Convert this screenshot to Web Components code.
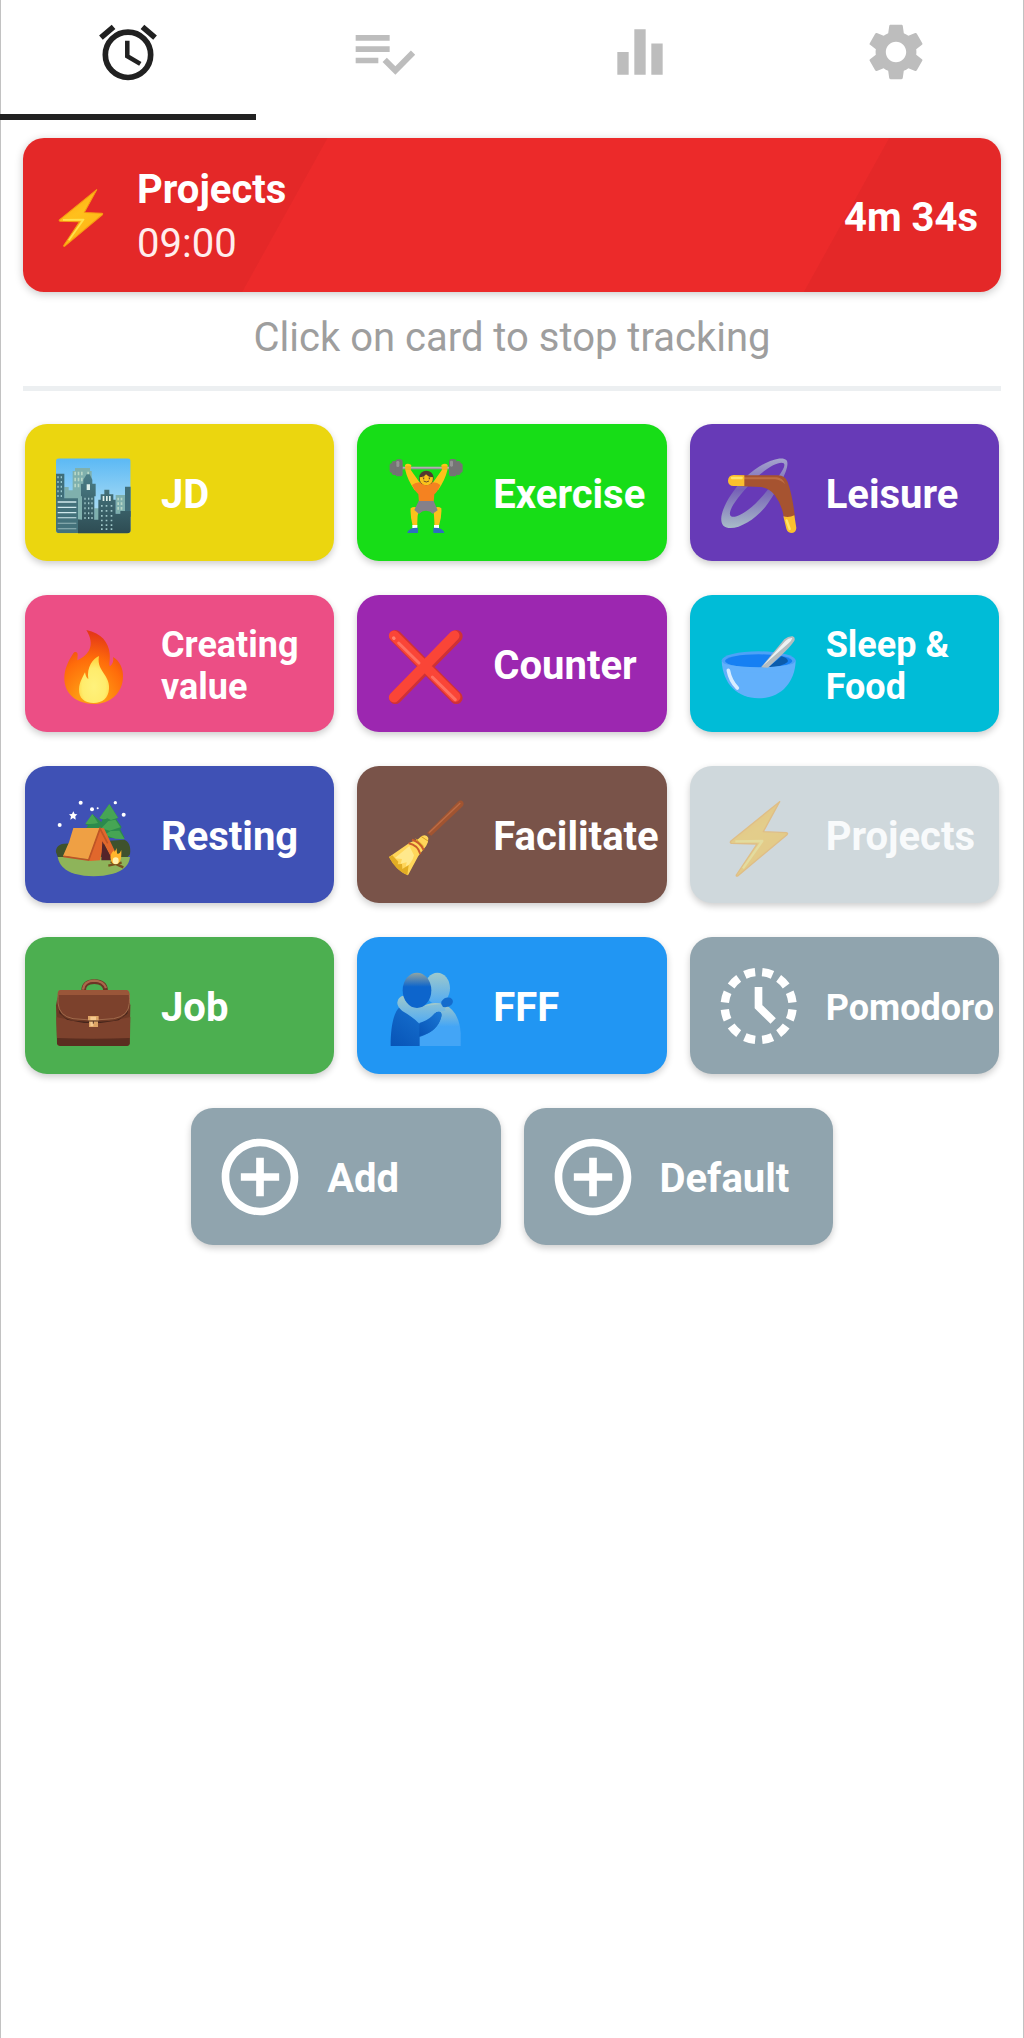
<!DOCTYPE html>
<html lang="en">
<head>
<meta charset="utf-8">
<meta name="viewport" content="width=device-width, initial-scale=1">
<title>Time tracker</title>
<style>
  body { margin: 0; background: #fff; font-family: Roboto, "Liberation Sans", sans-serif; font-size: 40px; }
</style>
</head>
<body>
<tracker-app></tracker-app>

<script>
const svg = (box, body) => `<svg viewBox="${box}" aria-hidden="true">${body}</svg>`;
const rects = (fill, list) => `<path fill="${fill}" d="${list.map(([x, y, w, h]) => `M${x} ${y}h${w}v${h}h${-w}z`).join('')}"/>`;
const dots = (xs, ys, w, h) => xs.flatMap(x => ys.map(y => [x, y, w, h]));

const ICONS = {
  alarm: svg('0 0 24 24', `<g fill="none" stroke="currentColor"><circle cx="12" cy="13" r="8" stroke-width="2"/><path stroke-width="1.6" d="M11.75 8v5.45l4.6 2.75"/><path stroke-width="2" d="M6.9 3.1 2.45 6.9M17.1 3.1l4.45 3.8"/></g>`),
  tasks: svg('0 0 24 24', `<path fill="currentColor" d="M14 10H2v2h12v-2zm0-4H2v2h12V6zM2 16h8v-2H2v2zm19.5-4.5L23 13l-6.99 7-4.51-4.5L13 14l3.01 3 5.49-5.5z"/>`),
  chart: svg('0 0 24 24', `<path fill="currentColor" d="M10 20h4V4h-4v16zm-6 0h4v-8H4v8zM16 9v11h4V9h-4z"/>`),
  settings: svg('0 0 24 24', `<path fill="currentColor" d="M19.14 12.94c.04-.3.06-.61.06-.94 0-.32-.02-.64-.07-.94l2.03-1.58c.18-.14.23-.41.12-.61l-1.92-3.32c-.12-.22-.37-.29-.59-.22l-2.39.96c-.5-.38-1.03-.7-1.62-.94L14.4 2.81c-.04-.24-.24-.41-.48-.41h-3.84c-.24 0-.43.17-.47.41L9.25 5.35C8.66 5.59 8.12 5.92 7.63 6.29L5.24 5.33c-.22-.08-.47 0-.59.22L2.74 8.87c-.12.21-.08.47.12.61l2.03 1.58C4.84 11.36 4.8 11.69 4.8 12s.02.64.07.94l-2.03 1.58c-.18.14-.23.41-.12.61l1.92 3.32c.12.22.37.29.59.22l2.39-.96c.5.38 1.03.7 1.62.94l.36 2.54c.05.24.24.41.48.41h3.84c.24 0 .44-.17.47-.41l.36-2.54c.59-.24 1.13-.56 1.62-.94l2.39.96c.22.08.47 0 .59-.22l1.92-3.32c.12-.22.07-.47-.12-.61L19.14 12.94zM12 15.6c-1.98 0-3.6-1.62-3.6-3.6s1.62-3.6 3.6-3.6 3.6 1.62 3.6 3.6-1.62 3.6-3.6 3.6z"/>`),
  add: svg('0 0 24 24', `<path fill="currentColor" d="M13 7h-2v4H7v2h4v4h2v-4h4v-2h-4V7zm-1-5C6.48 2 2 6.48 2 12s4.48 10 10 10 10-4.48 10-10S17.52 2 12 2zm0 18c-4.41 0-8-3.59-8-8s3.59-8 8-8 8 3.59 8 8-3.59 8-8 8z"/>`),
  pomodoro: svg('117 627 276 276', `<g fill="none" stroke="currentColor"><circle cx="254" cy="765" r="102" stroke-width="25" pathLength="120" stroke-dasharray="6 4" stroke-dashoffset="-2"/><path stroke-width="23" d="M253.500 708V767l44 43"/></g>`),

  bolt: svg('117 115 276 276', `
    <defs><linearGradient id="b" x1="0" y1="0" x2=".5" y2="1"><stop offset="0" stop-color="#ff9f0f"/><stop offset=".5" stop-color="#ffc01c"/><stop offset="1" stop-color="#ffb414"/></linearGradient></defs>
    <path fill="url(#b)" stroke="#f79b12" stroke-width="4" stroke-linejoin="round" d="M317 153 170 272q-3 5 3 6l76 2-62 93q-1 5 4 3L339 252q4-5-2-6l-69-3z"/>
    <path fill="none" stroke="#ffe24d" stroke-width="7" stroke-linejoin="round" d="M184 272l81-1-58 82"/>`),

  city: svg('144 112 276 276', `
    <defs>
      <clipPath id="c"><rect x="168" y="146" width="224" height="225" rx="10"/></clipPath>
      <linearGradient id="s" x2="0" y2="1"><stop stop-color="#5bb9f5"/><stop offset=".8" stop-color="#b5e1f3"/></linearGradient>
      <linearGradient id="d" x2="0" y2="1"><stop stop-color="#4b7e87"/><stop offset="1" stop-color="#2d4b52"/></linearGradient>
    </defs>
    <g clip-path="url(#c)">
      <rect x="168" y="146" width="224" height="225" fill="url(#s)"/>
      ${rects('#7fb0ad', [[218,184,57,150],[225,175,45,12],[193,232,13,40],[206,242,12,30],[283,296,14,40],[347,256,29,56]])}
      ${rects('#b7d6c6', [...dots([223,233,243,262],[186,204,222],5,11), ...dots([352,362],[264,278,292],5,8)])}
      ${rects('#3f6e79', [[168,192,25,80],[375,231,20,90]])}
      ${rects('#9ac9cf', dots([172,182],[200,214,228,242,256],4,6))}
      <path fill="url(#d)" d="M246 330v-70h-3v-38h7v-12l10-16h9l8 16v12h10v38h-4v70h12V270h7v-16h11v-14h15v14h12v16h7v42h14v-8h32v70H234v-45z"/>
      ${rects('#dff0ea', [[260,224,10,17],[308,259,5,15],[318,259,5,15],[327,259,5,15]])}
      ${rects('#9fc6c8', [...dots([253,264,274],[264,278,293,308,322],4,6), ...dots([303,317,332],[286,301,316,330,344,356],5,5)])}
      <path fill="#44727b" d="M168 266h66v105h-66z"/>
      ${rects('#cfe9ec', [[173,275,56,4],[173,291,56,4],[173,307,56,4],[173,323,56,3]])}
      ${rects('#94b7b9', [[173,339,56,3],[173,356,56,3]])}
    </g>`),

  lifter: svg('121 112 276 276', `
    <path stroke="#9a9a9a" stroke-width="7" d="M165 175h190"/>
    <path stroke="#c5c5c5" stroke-width="2" d="M190 173h140"/>
    <g fill="#747474"><rect x="150" y="161" width="10" height="28" rx="5"/><rect x="156" y="154" width="16" height="42" rx="6"/><rect x="167" y="149" width="22" height="51" rx="8"/><rect x="359" y="161" width="10" height="28" rx="5"/><rect x="348" y="154" width="15" height="42" rx="6"/><rect x="328" y="148" width="23" height="52" rx="8"/></g>
    <g fill="#949494"><rect x="170" y="154" width="9" height="18" rx="4"/><rect x="331" y="153" width="9" height="18" rx="4"/></g>
    <g fill="#fcc21b"><path d="M196 166q7-7 19 0l-2 14 28 40-16 22q-22-32-28-60z"/><path d="M324 166q-7-7-19 0l2 14-28 40 16 22q22-32 28-60z"/>
    <path d="M213 296q12-9 25 3-6 20-5 49h-14q-8-30-6-52zM305 296q-12-9-25 3 5 20 4 49h14q9-30 7-52z"/></g>
    <g fill="none" stroke="#e59623" stroke-width="2"><path d="M198 172h16M196 178h17M306 172h16M306 178h16"/></g>
    <path fill="#f58220" d="M217 226q10-8 23-8h40q14 0 22 8-8 20-18 28l-2 24h-44l-2-24q-12-10-19-28z"/>
    <path fill="#85808a" d="M237 274h45l12 28-15 10q-8-9-20-9t-21 10l-14-12z"/>
    <path fill="#fff" d="M218 346h15v10h-15zM283 346h15v10h-15z"/>
    <path fill="#2f6dc0" d="M235 354v16h-32q1-9 17-15zM281 354v16h33q-1-9-17-15z"/>
    <circle cx="260" cy="205" r="22" fill="#543930"/>
    <path fill="#fcc21b" d="M240 203q14-1 19-9 8 9 21 9 0 23-20 24-20-1-20-24z"/>
    <path fill="none" stroke="#4e342e" stroke-width="2.500" d="M249 202h5M267 202h5M252 214q8 6 16 0"/>
    <circle cx="252" cy="207" r="2" fill="#4e342e"/><circle cx="269" cy="207" r="2" fill="#4e342e"/>`),

  boomerang: svg('117 112 276 276', `
    <defs><linearGradient id="w" x2="0" y2="1"><stop stop-color="#a5a6cc"/><stop offset=".45" stop-color="#7661b7"/><stop offset="1" stop-color="#a8bcc8"/></linearGradient></defs>
    <path fill="url(#w)" fill-rule="evenodd" d="M337 151c14 16-18 76-55 130-36 52-107 91-134 67-22-25 17-97 65-144 49-47 109-68 124-53zM329 161c-12-9-57 15-98 59-42 43-74 89-60 100 15 8 57-16 98-65 39-45 71-85 60-94z"/>
    <path fill="#a65330" d="M185 197h127q21 1 29 20 14 38 22 106-17 6-34-3-6-37-27-64-15-21-42-24l-75-3z"/>
    <path fill="#bd6d43" d="M210 203h99q17 2 25 21-14-14-31-15h-93z"/>
    <path fill="#fbc02d" d="M211 197v32h-32q-17-1-17-16 1-16 17-17zM328 320q17 5 33-3l6 38q-1 14-13 15-13 0-17-13z"/>
    <path fill="none" stroke="#ffe36a" stroke-width="7" stroke-linecap="round" d="M174 205h29M338 332l9 26"/>`),

  fire: svg('144 624 276 276', `
    <defs>
      <radialGradient id="f" cx=".45" cy="1" r=".95"><stop offset=".25" stop-color="#ff9913"/><stop offset=".65" stop-color="#ff6c0a"/><stop offset="1" stop-color="#e53916"/></radialGradient>
      <radialGradient id="y" cx=".5" cy=".65" r=".65"><stop stop-color="#fff27c"/><stop offset=".6" stop-color="#ffec6c"/><stop offset="1" stop-color="#ffce35"/></radialGradient>
    </defs>
    <path fill="url(#f)" d="M259 660c46 9 67 38 70 71 2 21-3 31 1 38 8-7 12-17 9-28 22 12 31 38 30 59-1 48-36 81-87 82-54 0-89-31-89-77 0-28 12-52 27-75 4-7 14-5 13 5l-1 16c37-17 54-47 27-91z"/>
    <path fill="url(#y)" d="M297 738c-5 27 7 40 17 56 11 17 14 29 13 43-2 28-20 42-46 42-28 0-45-15-44-41 1-22 11-36 18-51 2 13 6 18 10 20-6-35 14-61 32-69z"/>`),

  cross: svg('121 624 276 276', `
    <g fill="none" stroke-linecap="round">
      <path stroke="#cf3136" stroke-width="38" d="m167 679 183 184M350 679 167 863"/>
      <path stroke="#fa4537" stroke-width="31" d="m163 677 184 183M344 677 163 862"/>
      <path stroke="#ff7061" stroke-width="9" d="m177 699 61 60M278 801l69 68"/>
      <path stroke="#ff8271" stroke-width="10" d="m162 684 1 1"/>
    </g>`),

  bowl: svg('117 624 276 276', `
    <path fill="#62b0fb" d="M143 754c4 66 45 111 111 111s108-46 111-111l-24-15H167z"/>
    <ellipse cx="254" cy="751" rx="111" ry="27" fill="#4da2f7"/>
    <ellipse cx="254" cy="753" rx="101" ry="20" fill="#1680f3"/>
    <path fill="#0b5cab" d="m323 739-42 34q44-3 60-17 4-10-18-17z"/>
    <path fill="#62b0fb" d="M150 762c65 13 145 13 208 0l-9 25H160z"/>
    <path fill="#b5bdc0" d="m261 772 70-84q12-10 25-9 10 4 4 15-12 20-78 79z"/>
    <path fill="#edf2f3" d="m265 769 69-76q10-10 21-9-3 11-13 17z"/>
    <path fill="none" stroke="#d8edff" stroke-width="11" stroke-linecap="round" d="M163 781q6 32 27 53"/>`),

  camping: svg('144 115 276 276', `
    <path fill="#3f522d" d="M170 310c-8-15 7-32 23-31l180-12c12 4 21 20 17 44l-24 27H180z"/>
    <path fill="#2b8a4d" d="m277 190-21 31 8 3-11 17h70l-22-23 6-1zM328 160l-30 43 10 2-14 33 8 24h72l-13-26 4-7-17-25 7-2z"/>
    <path fill="#46a554" d="m277 190-21 29q20 3 38-2zM328 160l-30 42q13 7 24 1l11 5 21-7zM325 211l-21 22 25 7 32-10-15-23zM332 241l-18 11 32 12 28 2-16-26z"/>
    <path fill="#8eb45a" d="M173 319h217q-4 37-51 50-58 15-116 0-43-13-50-50z"/>
    <path fill="#e1672c" d="M299 232 266 323l3 8 31-2 12-50 22 43 20-1-42-88z"/>
    <path fill="#542429" d="m307 272-3 57h34z"/>
    <path fill="#efa044" d="M220 232h80l-34 94-77-10q21-42 31-84z"/>
    <path fill="none" stroke="#bd5426" stroke-width="5" d="m190 317 76 11 34-94 23 44"/>
    <path stroke="#79501f" stroke-width="7" d="m325 345 40-9M332 333l38 17"/>
    <path fill="#ffb52c" d="M332 326q-3-16 10-27-1 12 8-7 0 16 3 18 8-2 11-12 2 43-17 43-13 0-15-15z"/>
    <ellipse cx="347" cy="330" rx="9" ry="10" fill="#fff1ae"/>
    <g fill="#fff"><circle cx="242" cy="156" r="6"/><circle cx="276" cy="176" r="6"/><circle cx="293" cy="173" r="3"/><circle cx="346" cy="156" r="5"/><circle cx="371" cy="192" r="6"/><circle cx="179" cy="223" r="6"/><path d="m220 182 4 8 8 1-6 6 1 10-8-5-8 5 2-10-6-6 9-1z"/></g>`),

  broom: svg('121 115 276 276', `
    <path fill="#a15431" d="M262 247 355 153q9-7 15 0 5 8-4 17L275 255z"/>
    <path fill="none" stroke="#bd6c45" stroke-width="4" d="m268 246 94-89"/>
    <path fill="#ffd65a" d="M246 256q15-7 20 6l-1 12q-5 14-12 20l-17 22-31 58q-33-13-57-55l62-43q19-7 25-10z"/>
    <path fill="#ffe88c" d="m209 286-44 37 22 2-4 14 18-4-3 17q20-17 25-38z"/>
    <path fill="#e2ad24" d="m148 319 10-5 18 19-2 8 13-1 1 15 19-12-4 31q-36-16-55-55z"/>
    <path fill="none" stroke="#ca5b2b" stroke-width="6" d="M207 278q27 5 35 32M217 267q25 7 35 31"/>
    <path fill="none" stroke="#d59c21" stroke-width="3" d="m228 264 24 23M244 257l21 14"/>`),

  briefcase: svg('144 627 276 276', `
    <path fill="none" stroke="#6b3525" stroke-width="14" d="M251 720q-1-28 32-28t34 28"/>
    <path fill="none" stroke="#a9694a" stroke-width="7" d="M249 716q2-26 34-27 27 1 35 22"/>
    <path fill="#6e3925" d="m174 732-6 31 3 114q1 8 10 8h198q9 0 10-8l2-114-6-31z"/>
    <path fill="#5a2e20" d="M171 861h218v16q-1 8-9 8H181q-9-1-10-8z"/>
    <path fill="#7d422d" d="M169 798q110 27 222 0l-1 63q-110 5-219 0z"/>
    <path fill="#45251b" d="M173 750q0 58 60 60 47 4 94 0 60-2 62-60l-7 38-26 20-54 8h-50l-51-10-23-19z"/>
    <path fill="#7c412c" stroke="#a06a4b" stroke-width="3" d="M177 719h207q6 7 4 38-2 38-47 46-64 9-122 0-42-8-45-47-1-28 3-37z"/>
    <path fill="#9a5639" d="M181 717h199q8 1 8 15H173q0-14 8-15z"/>
    <path fill="#dea566" d="M264 795h32v14h-2v19h-27v-19h-3z"/>
    <path fill="#f5ca90" d="M271 797h17v10h-17zM271 812h9v14h-9z"/>
    <path stroke="#513124" stroke-width="3" d="M264 810h32M280 810v8"/>`),

  hug: svg('121 627 276 276', `
    <defs>
      <linearGradient id="h1" x2="0" y2="1"><stop stop-color="#92a5a2"/><stop offset=".4" stop-color="#0d65cc"/></linearGradient>
      <linearGradient id="h2" x2="0" y2="1"><stop stop-color="#9fc9cb"/><stop offset="1" stop-color="#4faaf4"/></linearGradient>
      <linearGradient id="h3" x2="0" y2="1"><stop stop-color="#a5cac9"/><stop offset=".55" stop-color="#43a5f6"/></linearGradient>
      <linearGradient id="h4" x1="1" x2="0" y2="1"><stop stop-color="#1b78d5"/><stop offset="1" stop-color="#0754b7"/></linearGradient>
    </defs>
    <ellipse cx="293" cy="712" rx="38" ry="47" fill="url(#h2)"/>
    <path fill="url(#h3)" d="M242 770q31-22 72-10 45 22 49 86v39H231z"/>
    <path fill="url(#h4)" d="M181 767q31-1 48 33l24 22q33-14 36-39 4-5 12-1 5 3 4 13-8 45-65 63v27h-87c0-56 8-102 28-118z"/>
    <path fill="url(#h2)" d="M190 734q7 3 7 14 10 18 59 17l54-7 8 21q-14 3-28 4-18 18-50 36-20-21-52-39-24-20-10-38 6-7 12-8z"/>
    <path fill="#146ccd" d="M305 752q9-16 27-12 14 8 3 22-8 8-25 6-8-8-5-16z"/>
    <path fill="url(#h4)" d="M239 816q27-7 46-29 8-7 17-4 7 5 2 18-13 42-65 55z"/>
    <ellipse cx="232" cy="718" rx="43" ry="53" fill="url(#h1)"/>`)
};

/* Registers a custom element whose shadow root is cloned from one template. */
function define(name, css, html, setup) {
  const template = document.createElement('template');
  template.innerHTML = `<style>*{box-sizing:border-box}${css}</style>${html}`;
  customElements.define(name, class extends HTMLElement {
    static observedAttributes = ['name'];
    constructor() {
      super();
      this.attachShadow({ mode: 'open' }).append(template.content.cloneNode(true));
    }
    connectedCallback() { if (setup) setup(this, this.shadowRoot); }
    attributeChangedCallback() { if (setup) setup(this, this.shadowRoot); }
  });
}

define('tracker-icon', `
  :host { display: block; flex: none; width: var(--icon-size, 92px); height: var(--icon-size, 92px); }
  div, svg { display: block; width: 100%; height: 100%; }
`, '<div></div>', (host, root) => { root.querySelector('div').innerHTML = ICONS[host.getAttribute('name')] || ''; });

define('tab-item', `
  :host { display: block; flex: 1; --icon-size: 68px; color: #bdbdbd; }
  :host([selected]) { color: #212121; }
  button { display: flex; justify-content: center; align-items: flex-start; width: 100%; height: 120px; padding: 18px 0 0; border: 0; border-bottom: 6px solid transparent; background: none; color: inherit; cursor: pointer; }
  :host([selected]) button { border-bottom-color: #212121; }
`, '<button type="button"><tracker-icon></tracker-icon></button>', (host, root) => {
  root.querySelector('tracker-icon').setAttribute('name', host.getAttribute('icon'));
  const button = root.querySelector('button');
  button.setAttribute('aria-label', host.getAttribute('label'));
  if (host.hasAttribute('selected')) button.setAttribute('aria-current', 'page');
});

define('tab-bar', `
  :host { display: block; }
  nav { display: flex; }
`, '<nav aria-label="Main"><slot></slot></nav>');

define('running-card', `
  :host { display: block; --icon-size: 70px; }
  button { display: flex; align-items: center; gap: 21px; width: 100%; height: 154px; padding: 0 23px; border: 0; border-radius: 21px; font: inherit; color: #fff; text-align: left; cursor: pointer;
    background: linear-gradient(119deg, #e42828 28.6%, #ec2a2a 28.7%, #ec2a2a 81.4%, #e42828 81.5%);
    box-shadow: 0 2px 8px rgba(0, 0, 0, .22); }
  .text { flex: 1; display: flex; flex-direction: column; padding-top: 4px; line-height: 54px; }
  .name, .elapsed { font-weight: 700; }
  .start { color: #ffeded; }
  .elapsed { padding-top: 4px; }
`, `<button type="button">
    <tracker-icon name="bolt"></tracker-icon>
    <span class="text"><span class="name"><slot></slot></span><span class="start"><slot name="start"></slot></span></span>
    <span class="elapsed"><slot name="elapsed"></slot></span>
  </button>`);

define('activity-card', `
  :host { display: block; width: calc((100% - 46px) / 3); }
  button { display: flex; align-items: center; gap: 21px; width: 100%; height: 137px; padding: 0 0 0 23px; border: 0; border-radius: 22px; background: var(--card, #90a4ae); color: #fff; font: inherit; font-weight: 700; line-height: 48px; text-align: left; cursor: pointer; box-shadow: 0 3px 7px rgba(0, 0, 0, .2); }
  span { min-width: 0; padding-top: 4px; }
  :host([small]) button { font-size: 36px; line-height: 42px; }
  :host([idle]) button { background: #cfd8dc; color: #f8fafb; }
  :host([idle]) tracker-icon { opacity: .42; }
`, '<button type="button"><tracker-icon></tracker-icon><span><slot></slot></span></button>', (host, root) => {
  root.querySelector('tracker-icon').setAttribute('name', host.getAttribute('icon'));
  if (host.hasAttribute('color')) host.style.setProperty('--card', host.getAttribute('color'));
});

define('activity-grid', `
  :host { display: flex; flex-wrap: wrap; justify-content: center; gap: 34px 23px; padding: 33px 2px; }
`, '<slot></slot>');

define('tracker-app', `
  :host { display: block; min-height: 100vh; box-shadow: inset 1px 0 #c2c2c2, inset -1px 0 #c2c2c2; }
  main { padding: 18px 23px; }
  p { margin: 0 0 2px; line-height: 92px; text-align: center; color: #9e9e9e; }
  hr { height: 5px; margin: 0; border: 0; background: #eceff1; }
`, `<tab-bar>
    <tab-item icon="alarm" label="Tracking" selected></tab-item>
    <tab-item icon="tasks" label="Records"></tab-item>
    <tab-item icon="chart" label="Statistics"></tab-item>
    <tab-item icon="settings" label="Settings"></tab-item>
  </tab-bar>
  <main>
    <running-card>Projects<span slot="start">09:00</span><span slot="elapsed">4m 34s</span></running-card>
    <p>Click on card to stop tracking</p>
    <hr>
    <activity-grid>
      <activity-card icon="city" color="#ebd60f">JD</activity-card>
      <activity-card icon="lifter" color="#17dd17">Exercise</activity-card>
      <activity-card icon="boomerang" color="#673ab7">Leisure</activity-card>
      <activity-card icon="fire" color="#ec4e85" small>Creating value</activity-card>
      <activity-card icon="cross" color="#9c27b0">Counter</activity-card>
      <activity-card icon="bowl" color="#00bcd7" small>Sleep &amp; Food</activity-card>
      <activity-card icon="camping" color="#3f51b5">Resting</activity-card>
      <activity-card icon="broom" color="#795349">Facilitate</activity-card>
      <activity-card icon="bolt" idle>Projects</activity-card>
      <activity-card icon="briefcase" color="#4caf50">Job</activity-card>
      <activity-card icon="hug" color="#2196f3">FFF</activity-card>
      <activity-card icon="pomodoro" small>Pomodoro</activity-card>
      <activity-card icon="add">Add</activity-card>
      <activity-card icon="add">Default</activity-card>
    </activity-grid>
  </main>`);
</script>
</body>
</html>
